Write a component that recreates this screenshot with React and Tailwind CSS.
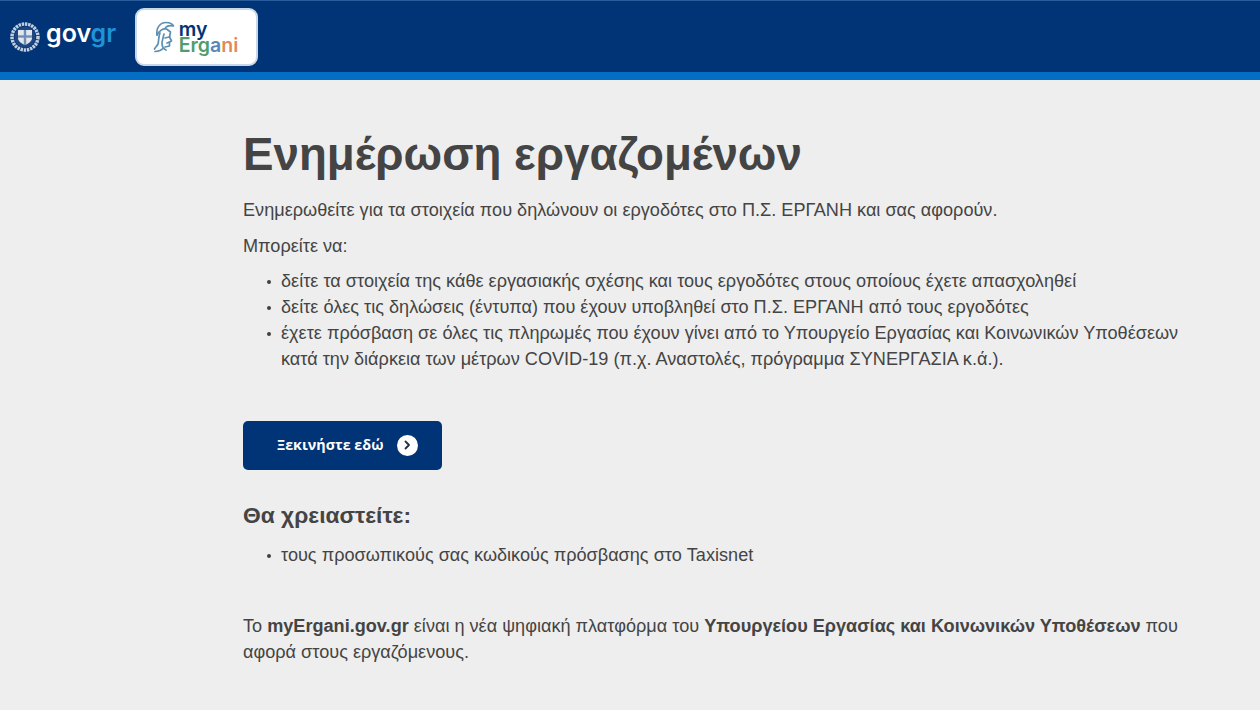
import React from "react";

function Emblem() {
  return (
    <svg width="30" height="30" viewBox="0 0 30 30" className="shrink-0">
      <circle cx="15" cy="15" r="13" fill="none" stroke="#c3cede" strokeWidth="3.500" strokeDasharray="2.400 0.800" />
      <circle cx="15" cy="15" r="10.500" fill="#20467f" />
      <path d="M8 8h14v8c0 3.500-3.500 5.500-7 7-3.500-1.500-7-3.500-7-7z" fill="#dfe6ef" />
      <rect x="13.800" y="8" width="2.400" height="15" fill="#6f8db5" />
      <rect x="8" y="13.300" width="14" height="2.400" fill="#6f8db5" />
    </svg>
  );
}

function Helmet() {
  return (
    <svg width="22" height="32" viewBox="0 0 22 32" fill="none" stroke="#5b8fb3" strokeWidth="1.700" strokeLinecap="round" strokeLinejoin="round">
      <path d="M4 14C3 7 7 1.500 13 1.500c4 0 6.500 1.500 7.500 3.500-3.500-1-6-.5-8 1.500" />
      <path d="M4 14c2-4 6-7 9.500-6l4 3-1 5" />
      <path d="M7 12c-2 5-1 8-2 11-1 2-2.500 3-3.500 5" />
      <path d="M11 13c-1 4-2 7-2 9.500 0 3 1 5 4 6.500" />
      <path d="M16.500 16l2 4-2 1v4l-4.500 1" />
      <path d="M12 17l4-1M14 22l2.500-1" />
      <path d="M2 30.500c3 0 6-1 8-3" />
    </svg>
  );
}

function Bullet({ children }) {
  return (
    <li className="relative">
      <span className="absolute left-[-14px] top-[12px] h-[3.500px] w-[3.500px] rounded-full bg-[#404040]" />
      {children}
    </li>
  );
}

export default function App() {
  return (
    <div className="h-[710px] overflow-hidden bg-[#eeeeee] font-['Liberation_Sans',Arial,sans-serif] text-[18.12px] leading-[26px] text-[#444444]">
      <header className="flex h-[80px] items-start border-t border-[#2a5d9c] border-b-[8px] border-b-[#046ec5] bg-[#003476] pl-[10px]">
        <div className="flex h-[71px] w-[107px] shrink-0 items-center">
          <Emblem />
          <span className="ml-[6px] mt-[-6px] font-['Inter',sans-serif] text-[25px] font-semibold leading-none text-white">
            gov<span className="text-[#1f93d8]">gr</span>
          </span>
        </div>
        <div className="ml-[18px] mt-[7px] flex h-[58px] w-[123px] items-center justify-center gap-[4px] rounded-[9px] border-2 border-[#c9d8e8] bg-white pr-[2px]">
          <Helmet />
          <div className="mt-[-1px] font-['Inter',sans-serif] text-[19.5px] font-semibold leading-[16px]">
            <div className="text-[#003476]">my</div>
            <div className="text-[#4f9d6e]">
              Erg<span className="text-[#5a86b8]">a</span><span className="text-[#e08a5a]">ni</span>
            </div>
          </div>
        </div>
      </header>

      <main className="ml-[243px] w-[950px]">
        <h1 className="mt-[47px] text-[45.7px] font-bold leading-[56px]">Ενημέρωση εργαζομένων</h1>
        <p className="mt-[14px]">Ενημερωθείτε για τα στοιχεία που δηλώνουν οι εργοδότες στο Π.Σ. ΕΡΓΑΝΗ και σας αφορούν.</p>
        <p className="mt-[10px]">Μπορείτε να:</p>
        <ul className="mt-[9px] pl-[38px]">
          <Bullet>δείτε τα στοιχεία της κάθε εργασιακής σχέσης και τους εργοδότες στους οποίους έχετε απασχοληθεί</Bullet>
          <Bullet>δείτε όλες τις δηλώσεις (έντυπα) που έχουν υποβληθεί στο Π.Σ. ΕΡΓΑΝΗ από τους εργοδότες</Bullet>
          <Bullet>έχετε πρόσβαση σε όλες τις πληρωμές που έχουν γίνει από το Υπουργείο Εργασίας και Κοινωνικών Υποθέσεων κατά την διάρκεια των μέτρων COVID-19 (π.χ. Αναστολές, πρόγραμμα ΣΥΝΕΡΓΑΣΙΑ κ.ά.).</Bullet>
        </ul>
        <button className="mt-[48.500px] flex h-[49.500px] w-[199px] items-center gap-[13px] rounded-[5px] bg-[#003476] pl-[34px] font-['Open_Sans',sans-serif] text-[14.3px] font-bold text-white">
          Ξεκινήστε εδώ
          <span className="flex h-[21px] w-[21px] items-center justify-center rounded-full bg-white">
            <svg width="10" height="10" viewBox="0 0 10 10" fill="none" stroke="#222f4a" strokeWidth="1.800" strokeLinecap="round" strokeLinejoin="round">
              <path d="M3.500 1.500L7 5 3.500 8.500" />
            </svg>
          </span>
        </button>
        <h2 className="mt-[30px] text-[22.8px] font-bold leading-[30px]">Θα χρειαστείτε:</h2>
        <ul className="mt-[12px] pl-[38px]">
          <Bullet>τους προσωπικούς σας κωδικούς πρόσβασης στο Taxisnet</Bullet>
        </ul>
        <p className="mt-[45px]">
          Το <strong>myErgani.gov.gr</strong> είναι η νέα ψηφιακή πλατφόρμα του <strong>Υπουργείου Εργασίας και Κοινωνικών Υποθέσεων</strong> που αφορά στους εργαζόμενους.
        </p>
      </main>
    </div>
  );
}
